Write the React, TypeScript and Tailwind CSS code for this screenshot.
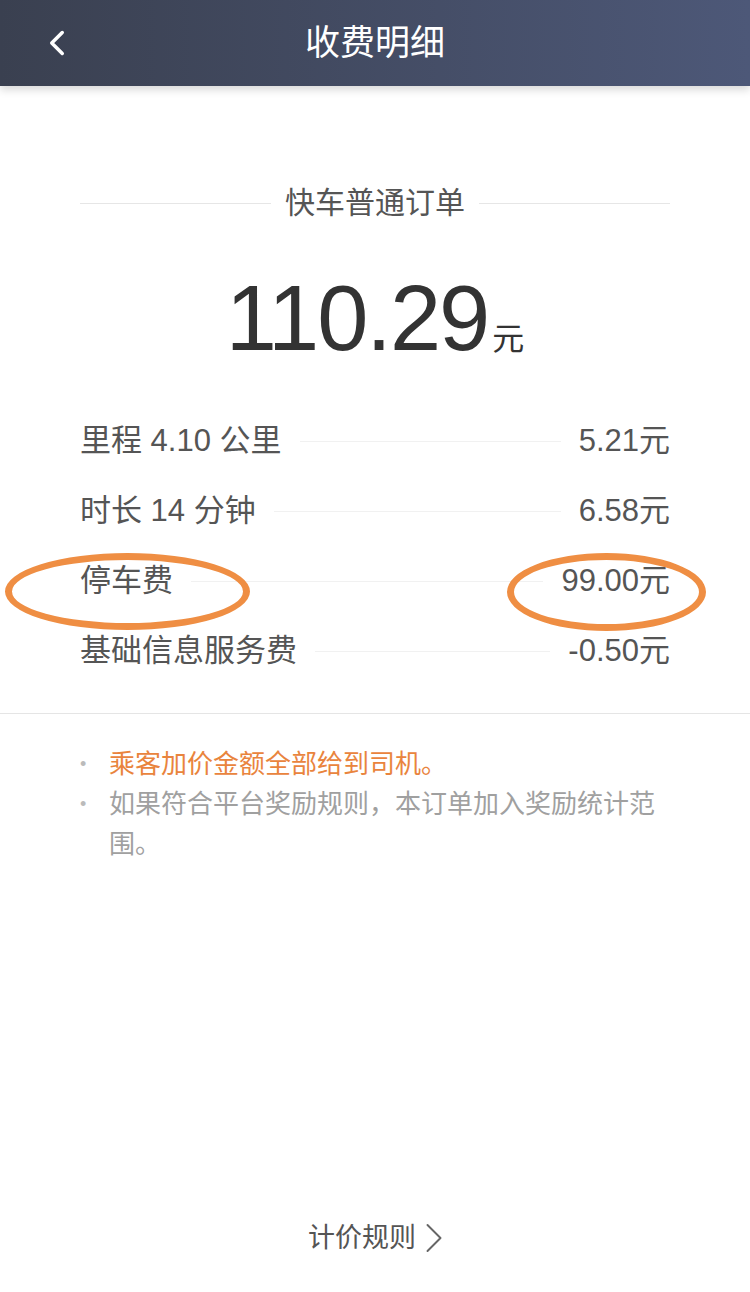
import { ChevronLeft, ChevronRight } from "lucide-react";

const rows = [
  { label: "里程 4.10 公里", value: "5.21元" },
  { label: "时长 14 分钟", value: "6.58元" },
  { label: "停车费", value: "99.00元" },
  { label: "基础信息服务费", value: "-0.50元" },
];

const font = { fontFamily: '"Liberation Sans", "Noto Sans CJK SC", sans-serif' };

export default function App() {
  return (
    <div className="relative flex min-h-[1292px] w-[750px] flex-col bg-white" style={font}>
      {/* Header */}
      <div className="relative z-10 flex h-[86px] items-center justify-center bg-gradient-to-r from-[#3a4050] to-[#4d5878] shadow-[0_4px_8px_rgba(0,0,0,0.15)]">
        <ChevronLeft className="absolute left-[36px] top-[22px] h-[42px] w-[42px] text-white" strokeWidth={2} />
        <h1 className="text-[35px] font-normal text-white">收费明细</h1>
      </div>

      {/* Order type */}
      <div className="mt-[97px] flex items-center px-[80px]">
        <div className="h-px flex-1 bg-[#e6e6e6]" />
        <span className="mx-[14px] text-[30px] leading-[40px] text-[#555]">快车普通订单</span>
        <div className="h-px flex-1 bg-[#e6e6e6]" />
      </div>

      {/* Total */}
      <div className="mt-[49px] flex items-baseline justify-center text-[#333]">
        <span className="text-[92px] leading-none tracking-[-2px]">110.29</span>
        <span className="ml-[4px] text-[32px] leading-none">元</span>
      </div>

      {/* Fee rows */}
      <div className="mt-[42px] px-[80px] pb-[27px]">
        {rows.map((r) => (
          <div key={r.label} className="flex h-[70px] items-center text-[31px] text-[#555]">
            <span>{r.label}</span>
            <div className="mx-[18px] h-px flex-1 bg-[#f1f1f1]" />
            <span>{r.value}</span>
          </div>
        ))}
      </div>

      <div className="h-px bg-[#e5e5e5]" />

      {/* Notes */}
      <div className="pl-[80px] pt-[30px] text-[26px] leading-[40px]">
        <div className="flex">
          <span className="w-[29px] shrink-0 text-[18px] text-[#bbb]">•</span>
          <span className="text-[#e9843d]">乘客加价金额全部给到司机。</span>
        </div>
        <div className="flex">
          <span className="w-[29px] shrink-0 text-[18px] text-[#bbb]">•</span>
          <span className="w-[560px] text-[#a0a0a0]">如果符合平台奖励规则，本订单加入奖励统计范围。</span>
        </div>
      </div>

      {/* Footer */}
      <div className="mt-auto mb-[34px] flex h-[40px] items-center justify-center pr-[2px] text-[27px] leading-[40px] text-[#555]">
        <span>计价规则</span>
        <ChevronRight className="ml-[-8px] mr-[-20px] h-[52px] w-[52px] text-[#666]" strokeWidth={0.9} />
      </div>

      {/* Annotation circles */}
      <div className="absolute left-[5px] top-[553px] h-[77px] w-[245px] rounded-[50%] border-[7px] border-[#ef8e43]" />
      <div className="absolute left-[507px] top-[553px] h-[78px] w-[199px] rounded-[50%] border-[7px] border-[#ef8e43]" />
    </div>
  );
}
